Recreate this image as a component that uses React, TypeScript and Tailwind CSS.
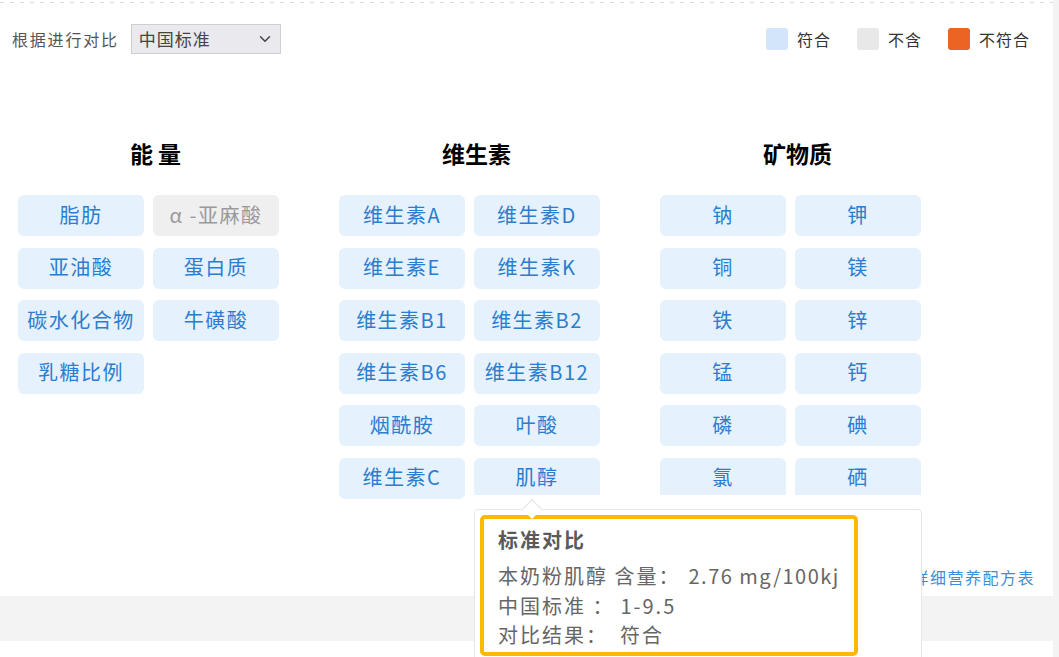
import { ChevronDown } from "lucide-react";

// 营养成分对比：按类别列出，悬停项显示标准对比浮层

type Item = { name: string; missing?: boolean };

const GROUPS: { title: string; items: Item[] }[] = [
  {
    title: "能 量",
    items: [
      { name: "脂肪" },
      { name: "α -亚麻酸", missing: true },
      { name: "亚油酸" },
      { name: "蛋白质" },
      { name: "碳水化合物" },
      { name: "牛磺酸" },
      { name: "乳糖比例" },
    ],
  },
  {
    title: "维生素",
    items: [
      { name: "维生素A" },
      { name: "维生素D" },
      { name: "维生素E" },
      { name: "维生素K" },
      { name: "维生素B1" },
      { name: "维生素B2" },
      { name: "维生素B6" },
      { name: "维生素B12" },
      { name: "烟酰胺" },
      { name: "叶酸" },
      { name: "维生素C" },
      { name: "肌醇" },
    ],
  },
  {
    title: "矿物质",
    items: [
      { name: "钠" },
      { name: "钾" },
      { name: "铜" },
      { name: "镁" },
      { name: "铁" },
      { name: "锌" },
      { name: "锰" },
      { name: "钙" },
      { name: "磷" },
      { name: "碘" },
      { name: "氯" },
      { name: "硒" },
    ],
  },
];

const LEGEND = [
  { label: "符合", color: "bg-[#d3e5fb]" },
  { label: "不含", color: "bg-[#e8e8e8]" },
  { label: "不符合", color: "bg-[#ec6424]" },
];

const font = "font-['Noto_Sans_CJK_SC',sans-serif]";

function Tooltip() {
  return (
    <div className="absolute left-[474px] top-[495px] w-[448px] bg-white pt-[14px]">
      {/* caret */}
      <div className="absolute left-[51px] top-[7px] h-[14px] w-[14px] rotate-45 border-l border-t border-[#e2e2e2] bg-white" />
      <div className="h-[170px] rounded-[4px] border border-[#e6e6e6] bg-white p-[5px]">
        <div className="w-[378px] rounded-[5px] border-[4px] border-[#fbb900] pb-[2px] pl-[14px] pt-[6px] text-[#666]">
          <div className="mb-[6px] text-[20px] font-bold leading-[30px] tracking-[2px] text-[#5a5a5a]">
            标准对比
          </div>
          <div className="whitespace-nowrap text-[20px] leading-[29.5px] tracking-[2px]">
            本奶粉肌醇 含量：<span className="ml-[8px] tracking-[1.5px]">2.76 mg/100kj</span>
          </div>
          <div className="whitespace-nowrap text-[20px] leading-[29.5px] tracking-[2px]">
            中国标准 ：<span className="ml-[6px]">1-9.5</span>
          </div>
          <div className="whitespace-nowrap text-[20px] leading-[29.5px] tracking-[2px]">
            对比结果：<span className="ml-[12px]">符合</span>
          </div>
        </div>
      </div>
    </div>
  );
}

export default function App() {
  return (
    <div className={`flex h-[657px] overflow-hidden bg-[#f3f3f3] ${font}`}>
      <div className="relative w-[1053px] shrink-0">
        <div className="bg-white">
          <div className="h-[2px]" />
          <div className="h-px bg-[repeating-linear-gradient(90deg,#d9d9d9_0_4px,transparent_4px_10px)]" />

          {/* header */}
          <div className="flex h-[51px] items-end pl-[12px] pr-[23px]">
            <div className="flex h-[30px] items-center">
              <span className="text-[16px] tracking-[1.8px] text-[#555]">根据进行对比</span>
              <div className="ml-[12px] flex h-[30px] w-[150px] items-center justify-between border border-[#cfcfcf] bg-[#e9e9ee] pl-[7px] pr-[6px]">
                <span className="text-[17px] tracking-[1px] text-[#444]">中国标准</span>
                <ChevronDown size={18} strokeWidth={2} className="text-[#444]" />
              </div>
            </div>
            <div className="ml-auto flex h-[30px] items-center gap-[26px]">
              {LEGEND.map((l) => (
                <div key={l.label} className="flex items-center gap-[9px]">
                  <span className={`h-[22px] w-[22px] rounded-[3px] ${l.color}`} />
                  <span className="text-[16px] tracking-[1px] text-[#333]">{l.label}</span>
                </div>
              ))}
            </div>
          </div>

          {/* groups */}
          <div className="mt-[87px] flex gap-x-[46px] pl-[18px]">
            {GROUPS.map((g) => (
              <div key={g.title} className="w-[275px]">
                <div className="text-center text-[23px] font-bold leading-[24px] text-black">
                  {g.title}
                </div>
                <div className="mt-[30px] grid w-[261px] grid-cols-2 gap-x-[9px] gap-y-[11.5px]">
                  {g.items.map((it) => (
                    <div
                      key={it.name}
                      className={`flex h-[41px] items-center justify-center whitespace-nowrap rounded-[6px] pb-[2px] text-[20px] tracking-[1.5px] ${
                        it.missing
                          ? "bg-[#efefef] text-[#9a9a9a]"
                          : "bg-[#e5f1fc] text-[#2b7dd0]"
                      }`}
                    >
                      {it.name}
                    </div>
                  ))}
                </div>
              </div>
            ))}
          </div>

          {/* link */}
          <div className="mt-[66px] flex justify-end pb-[7px] pr-[18px]">
            <span className="text-[16px] leading-[24px] tracking-[1.5px] text-[#3d8fd9]">
              查看详细营养配方表
            </span>
          </div>
        </div>

        <div className="h-[45px] bg-[#f3f3f3]" />
        <div className="h-[200px] bg-white" />

        <Tooltip />
      </div>
      <div className="flex-1 bg-[#f3f3f3]" />
    </div>
  );
}
